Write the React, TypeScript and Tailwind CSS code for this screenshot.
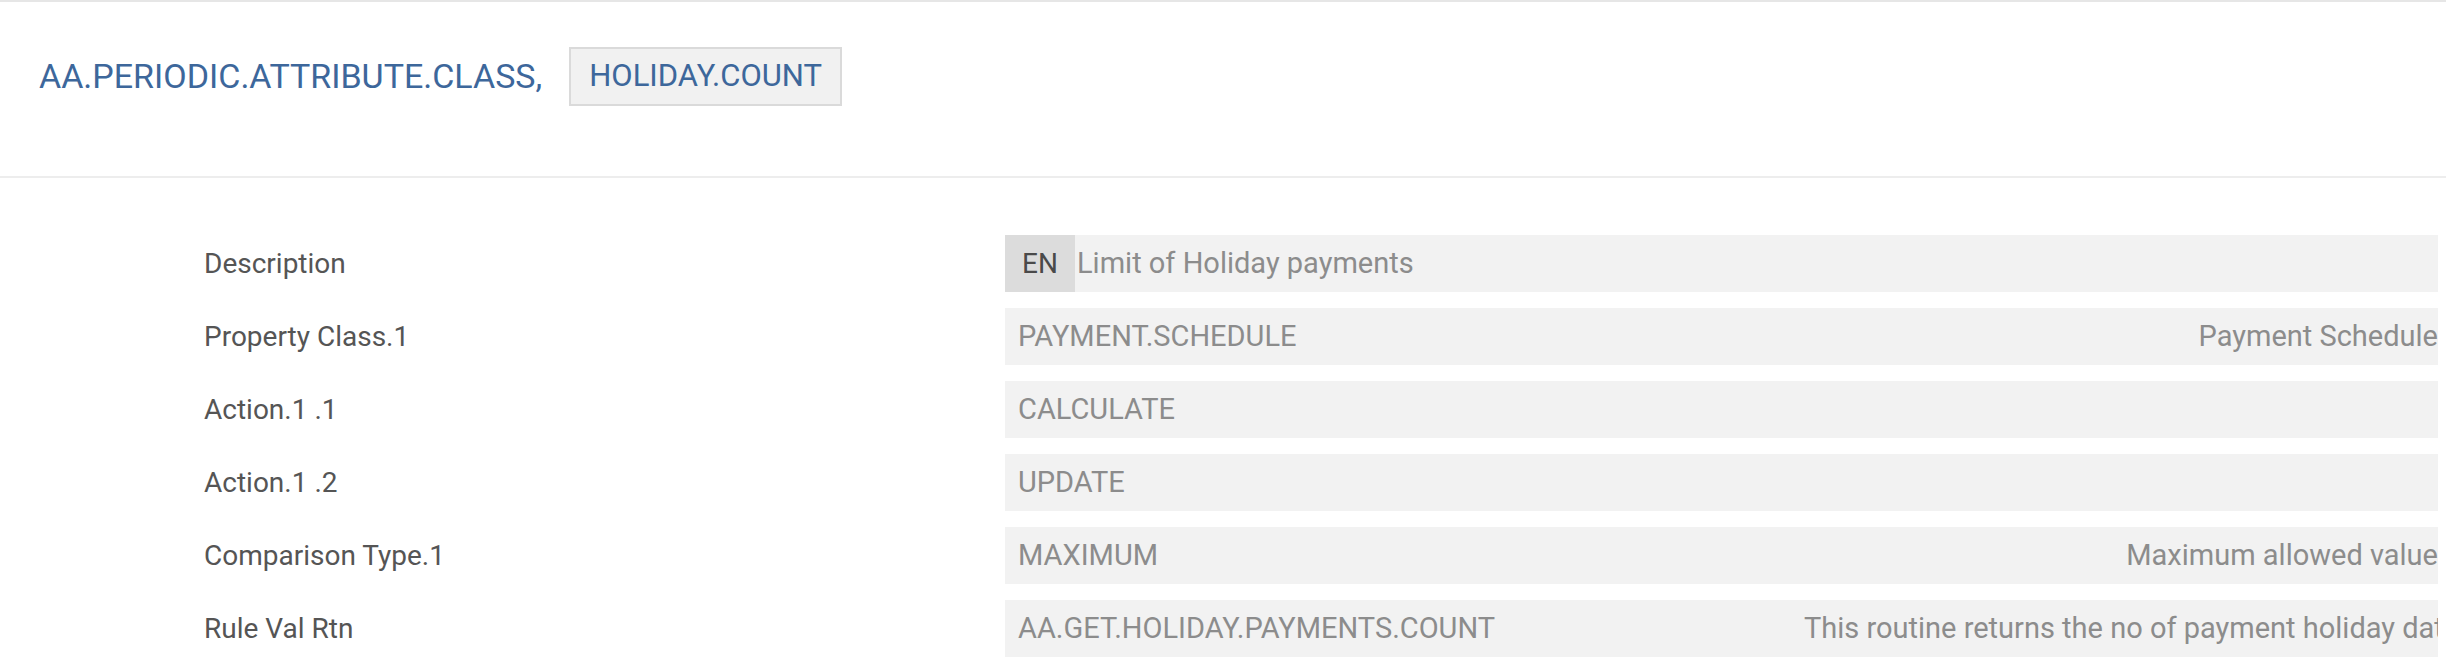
import React from 'react';

const rows = [
  { label: 'Description', value: 'Limit of Holiday payments', lang: true, note: '' },
  { label: 'Property Class.1', value: 'PAYMENT.SCHEDULE', note: 'Payment Schedule' },
  { label: 'Action.1 .1', value: 'CALCULATE', note: '' },
  { label: 'Action.1 .2', value: 'UPDATE', note: '' },
  { label: 'Comparison Type.1', value: 'MAXIMUM', note: 'Maximum allowed value' },
  { label: 'Rule Val Rtn', value: 'AA.GET.HOLIDAY.PAYMENTS.COUNT', note: 'This routine returns the no of payment holiday dates' },
];

export default function App() {
  return (
    <div className="w-[2446px] h-[658px] bg-white overflow-hidden" style={{ fontFamily: 'Roboto, "Liberation Sans", sans-serif' }}>
      <div className="h-[2px] bg-[#e6e6e6]" />

      {/* Header */}
      <div className="h-[176px] border-b-2 border-[#ededed] pt-[45px] pl-[39px]">
        <div className="flex items-center gap-[27px]">
          <span className="text-[34px] text-[#3d679b]">AA.PERIODIC.ATTRIBUTE.CLASS,</span>
          <span className="h-[59px] flex items-center px-[18px] bg-[#f1f1f1] border-2 border-[#dadada] text-[31px] text-[#3d679b]">
            HOLIDAY.COUNT
          </span>
        </div>
      </div>

      {/* Rows */}
      <div className="pt-[57px] pl-[204px] flex flex-col gap-[16px]">
        {rows.map((r) => (
          <div key={r.label} className="flex items-center">
            <div className="w-[801px] text-[28px] text-[#555555]">{r.label}</div>
            <div className="w-[1433px] h-[57px] bg-[#f2f2f2] flex items-center overflow-hidden">
              {r.lang ? (
                <>
                  <span className="w-[70px] h-full flex-none flex items-center justify-center bg-[#dcdcdc] text-[28px] text-[#4a4a4a]">EN</span>
                  <span className="pl-[2px] text-[29px] text-[#8c8c8c]">{r.value}</span>
                </>
              ) : (
                <>
                  <span className="flex-1 pl-[13px] text-[29px] text-[#8c8c8c] whitespace-nowrap">{r.value}</span>
                  <span className="w-[634px] flex-none text-right whitespace-nowrap text-[29px] text-[#8c8c8c]">{r.note}</span>
                </>
              )}
            </div>
          </div>
        ))}
      </div>
    </div>
  );
}
